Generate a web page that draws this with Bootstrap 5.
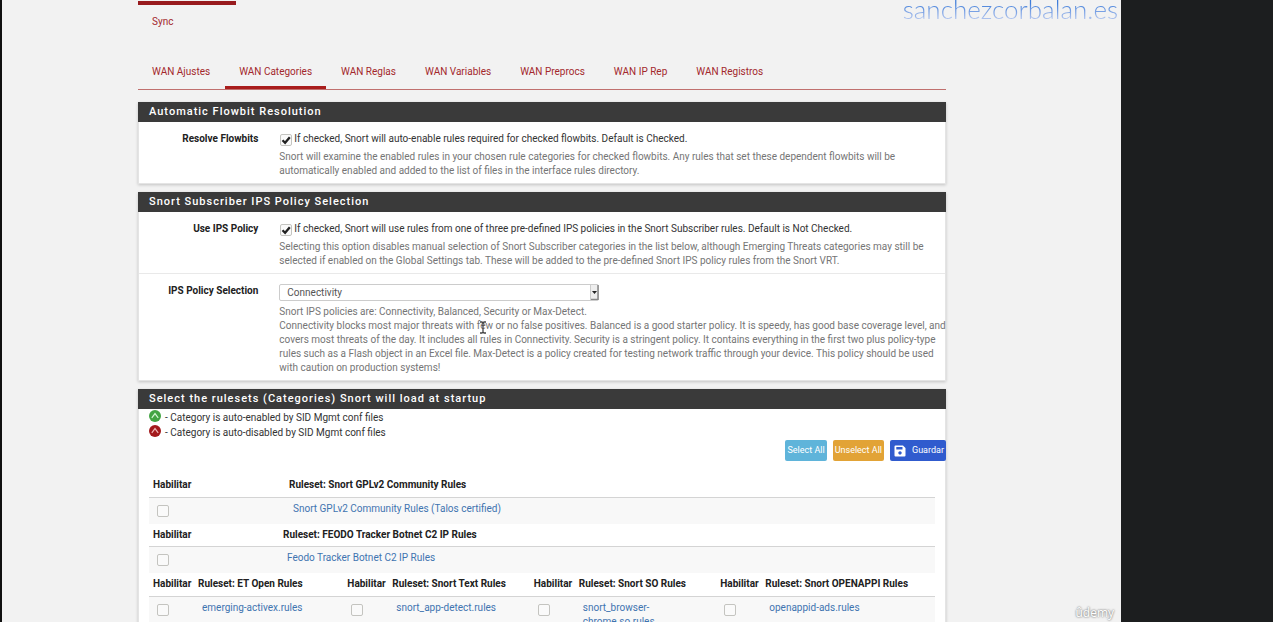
<!DOCTYPE html>
<html lang="es">
<head>
<meta charset="utf-8">
<meta name="viewport" content="width=device-width, initial-scale=1">
<title>Snort - WAN Categories</title>
<link href="https://cdn.jsdelivr.net/npm/bootstrap@5.3.0/dist/css/bootstrap.min.css" rel="stylesheet">
<style>
  body { font-family: Roboto, "Liberation Sans", sans-serif; font-size: 10px; line-height: 14px; color: #333; background: #1c1e1f; }
  .stage { background: #f2f2f2; border-left: 2px solid #111; padding: 1px 175px 0 136px; }
  .side-strip { flex: 0 0 152px; background: #1c1e1f; }
  .site-mark { top: 0; right: 3px; padding-bottom: 4px; font: 300 26px/18px Lato, "Open Sans", sans-serif; background: linear-gradient(#3f7dda 15%, #b4c6ef 90%); -webkit-background-clip: text; background-clip: text; color: transparent; }
  .video-mark { right: 7px; bottom: 1px; font: 400 12px/16px "Open Sans", sans-serif; color: #fff; text-shadow: 0 0 2px #777, 0 0 2px #999; }
  .upper-tabs { min-height: 54px; }
  .upper-tabs .active-bar { width: 98px; height: 4px; background: #981b1e; }
  .tab-link { display: block; color: #a3282c; text-decoration: none; padding: 10px 14px 7px; }
  .main-tabs { border-bottom: 1px solid #c0706e; gap: 1px; margin-bottom: 12px; }
  .main-tabs .tab-link { border-bottom: 3px solid transparent; }
  .main-tabs .tab-link.active { border-bottom-color: #a91d1c; }
  .box { background: #fff; border: 1px solid #e4e4e4; border-top: 0; box-shadow: 0 1px 3px rgba(0,0,0,.2); margin-bottom: 8px; }
  .box-title { background: #3a3a3a; color: #fff; font-size: 11px; line-height: 20px; font-weight: 500; letter-spacing: 1px; padding: 0 11px; margin: 0 -1px; }
  .field-row { padding: 10px 0 5px; }
  .field-row + .field-row { border-top: 1px solid #e9e9e9; }
  .field-name { font-weight: 700; color: #212121; text-align: right; padding-right: 15px; }
  .field-body { padding: 0 0 0 6px; }
  .help { color: #757575; margin-top: 4px; }
  .tick { -webkit-appearance: none; appearance: none; width: 12px; height: 12px; margin: 0; border: 1px solid #c4c4c0; border-radius: 2px; background: #fafafa center/10px 10px no-repeat; flex: none; }
  .tick:checked { background-image: url("data:image/svg+xml,%3Csvg xmlns='http://www.w3.org/2000/svg' viewBox='0 0 10 10'%3E%3Cpath d='M1.5 5.2l2.6 2.6L8.8 2.2' fill='none' stroke='%23222' stroke-width='2.3'/%3E%3C/svg%3E"); }
  .tick-line { gap: 2px; }
  .tick-line .tick { margin: 2px 0 0 1px; }
  .pick { width: 320px; max-width: 100%; height: 17px; }
  .pick select { -webkit-appearance: none; appearance: none; width: 100%; height: 17px; border: 1px solid #ccc; border-radius: 2px; background: #fff; color: #555; font-size: 10px; line-height: 15px; padding: 0 16px 0 7px; display: block; }
  .pick svg { right: 0; top: 1px; pointer-events: none; }
  .ibeam { left: 30%; top: 16px; }
  .legend-list { padding: 1px 10px 0; }
  .legend-list div { height: 15px; line-height: 15px; }
  .actions { gap: 6px; margin: 0 -1px 13px 0; }
  .act { border: 0; border-radius: 2px; color: #fff; font-size: 9px; line-height: 13px; padding: 4px 2px; height: 21px; }
  .act-all { background: #5fb4da; }
  .act-none { background: #e2a336; }
  .act-save { background: #305bce; gap: 6px; padding-left: 4px; }
  .sets { margin: 0 10px; }
  .sets table { width: 100%; table-layout: fixed; }
  .sets th { height: 23px; padding: 4px 4px; border-bottom: 1px solid #d4d4d4; color: #212121; font-weight: 700; white-space: nowrap; }
  .sets td { padding: 4px 8px 7px; background: #f8f8f8; vertical-align: top; }
  .sets .tick { display: block; margin-top: 3px; }
  .sets a { color: #3f74b0; text-decoration: none; }
  .c-gpl { width: 136px; } .c-feodo { width: 130px; }
  .c-hab { width: 45px; } .c-et { width: 19%; } .c-so { width: 18%; }
</style>
</head>
<body>
<div class="d-flex vh-100 overflow-hidden">
  <main class="stage position-relative flex-grow-1 overflow-hidden">
    <div class="site-mark position-absolute">sanchezcorbalan.es</div>

    <nav class="upper-tabs">
      <div class="active-bar"></div>
      <a class="tab-link" href="#">Sync</a>
    </nav>
    <nav class="main-tabs d-flex">
      <a class="tab-link" href="#">WAN Ajustes</a>
      <a class="tab-link active" href="#">WAN Categories</a>
      <a class="tab-link" href="#">WAN Reglas</a>
      <a class="tab-link" href="#">WAN Variables</a>
      <a class="tab-link" href="#">WAN Preprocs</a>
      <a class="tab-link" href="#">WAN IP Rep</a>
      <a class="tab-link" href="#">WAN Registros</a>
    </nav>

    <section class="box">
      <h2 class="box-title">Automatic Flowbit Resolution</h2>
      <div class="field-row row g-0">
        <label class="field-name col-2" for="flowbits">Resolve Flowbits</label>
        <div class="field-body col-10">
          <div class="tick-line d-flex"><input class="tick" type="checkbox" id="flowbits" checked><label for="flowbits">If checked, Snort will auto-enable rules required for checked flowbits. Default is Checked.</label></div>
          <div class="help">Snort will examine the enabled rules in your chosen rule categories for checked flowbits. Any rules that set these dependent flowbits will be<br>automatically enabled and added to the list of files in the interface rules directory.</div>
        </div>
      </div>
    </section>

    <section class="box">
      <h2 class="box-title">Snort Subscriber IPS Policy Selection</h2>
      <div class="field-row row g-0">
        <label class="field-name col-2" for="ips">Use IPS Policy</label>
        <div class="field-body col-10">
          <div class="tick-line d-flex"><input class="tick" type="checkbox" id="ips" checked><label for="ips">If checked, Snort will use rules from one of three pre-defined IPS policies in the Snort Subscriber rules. Default is Not Checked.</label></div>
          <div class="help">Selecting this option disables manual selection of Snort Subscriber categories in the list below, although Emerging Threats categories may still be<br>selected if enabled on the Global Settings tab. These will be added to the pre-defined Snort IPS policy rules from the Snort VRT.</div>
        </div>
      </div>
      <div class="field-row row g-0">
        <label class="field-name col-2" for="policy">IPS Policy Selection</label>
        <div class="field-body col-10">
          <div class="pick position-relative">
            <select id="policy"><option>Connectivity</option><option>Balanced</option><option>Security</option><option>Max-Detect</option></select>
            <svg class="position-absolute" width="9" height="15" viewBox="0 0 9 15"><path d="M.5 0v15" stroke="#ccc"/><path d="M1 0h7v15H1z" fill="#eee"/><path d="M8 0v14.500H1" fill="none" stroke="#888" stroke-width="1.500"/><path d="M2 6h5L4.500 9z" fill="#222"/></svg>
          </div>
          <div class="help position-relative text-nowrap">Snort IPS policies are: Connectivity, Balanced, Security or Max-Detect.<br>Connectivity blocks most major threats with few or no false positives. Balanced is a good starter policy. It is speedy, has good base coverage level, and<br>covers most threats of the day. It includes all rules in Connectivity. Security is a stringent policy. It contains everything in the first two plus policy-type<br>rules such as a Flash object in an Excel file. Max-Detect is a policy created for testing network traffic through your device. This policy should be used<br>with caution on production systems!
            <svg class="ibeam position-absolute" width="8" height="13" viewBox="0 0 8 13"><path d="M1 1h2l1 1 1-1h2M4 2v9M1 12h2l1-1 1 1h2" fill="none" stroke="#444" stroke-width="1.300"/></svg>
          </div>
        </div>
      </div>
    </section>

    <section class="box">
      <h2 class="box-title">Select the rulesets (Categories) Snort will load at startup</h2>
      <div class="legend-list">
        <div class="d-flex gap-1"><svg width="12" height="12" viewBox="0 0 12 12"><circle cx="6" cy="6" r="6" fill="#43a443"/><path d="M2.800 7.800L6 3.600l3.200 4.200" fill="none" stroke="#d4f5d4" stroke-width="1.200"/></svg>- Category is auto-enabled by SID Mgmt conf files</div>
        <div class="d-flex gap-1"><svg width="12" height="12" viewBox="0 0 12 12"><circle cx="6" cy="6" r="6" fill="#a3191c"/><path d="M2.800 7.800L6 3.600l3.200 4.200" fill="none" stroke="#eeb5b5" stroke-width="1.200"/></svg>- Category is auto-disabled by SID Mgmt conf files</div>
      </div>
      <div class="actions d-flex justify-content-end">
        <button type="button" class="act act-all">Select All</button>
        <button type="button" class="act act-none">Unselect All</button>
        <button type="button" class="act act-save d-flex align-items-center"><svg width="12" height="12" viewBox="0 0 12 12"><path fill="#fff" fill-rule="evenodd" d="M1.500.5H9L11.500 3v7.500a1 1 0 0 1-1 1h-9a1 1 0 0 1-1-1v-9a1 1 0 0 1 1-1zM2.300 2v2.500h6.200V2zM6 6.200a1.700 1.700 0 1 0 .01 0z"/></svg>Guardar</button>
      </div>
      <div class="sets">
        <table>
          <colgroup><col class="c-gpl"><col></colgroup>
          <thead><tr><th>Habilitar</th><th>Ruleset: Snort GPLv2 Community Rules</th></tr></thead>
          <tbody><tr><td><input class="tick" type="checkbox" aria-label="Snort GPLv2"></td><td><a href="#">Snort GPLv2 Community Rules (Talos certified)</a></td></tr></tbody>
        </table>
        <table>
          <colgroup><col class="c-feodo"><col></colgroup>
          <thead><tr><th>Habilitar</th><th>Ruleset: FEODO Tracker Botnet C2 IP Rules</th></tr></thead>
          <tbody><tr><td><input class="tick" type="checkbox" aria-label="Feodo"></td><td><a href="#">Feodo Tracker Botnet C2 IP Rules</a></td></tr></tbody>
        </table>
        <table>
          <colgroup><col class="c-hab"><col class="c-et"><col class="c-hab"><col class="c-so"><col class="c-hab"><col class="c-so"><col class="c-hab"><col></colgroup>
          <thead><tr><th>Habilitar</th><th>Ruleset: ET Open Rules</th><th>Habilitar</th><th>Ruleset: Snort Text Rules</th><th>Habilitar</th><th>Ruleset: Snort SO Rules</th><th>Habilitar</th><th>Ruleset: Snort OPENAPPI Rules</th></tr></thead>
          <tbody><tr>
            <td><input class="tick" type="checkbox" aria-label="emerging-activex"></td><td><a href="#">emerging-activex.rules</a></td>
            <td><input class="tick" type="checkbox" aria-label="snort_app-detect"></td><td><a href="#">snort_app-detect.rules</a></td>
            <td><input class="tick" type="checkbox" aria-label="snort_browser-chrome"></td><td><a href="#">snort_browser-<br>chrome.so.rules</a></td>
            <td><input class="tick" type="checkbox" aria-label="openappid-ads"></td><td><a href="#">openappid-ads.rules</a></td>
          </tr></tbody>
        </table>
      </div>
    </section>

    <div class="video-mark position-absolute">ûdemy</div>
  </main>
  <aside class="side-strip"></aside>
</div>
<script src="https://cdn.jsdelivr.net/npm/bootstrap@5.3.0/dist/js/bootstrap.bundle.min.js"></script>
</body>
</html>
